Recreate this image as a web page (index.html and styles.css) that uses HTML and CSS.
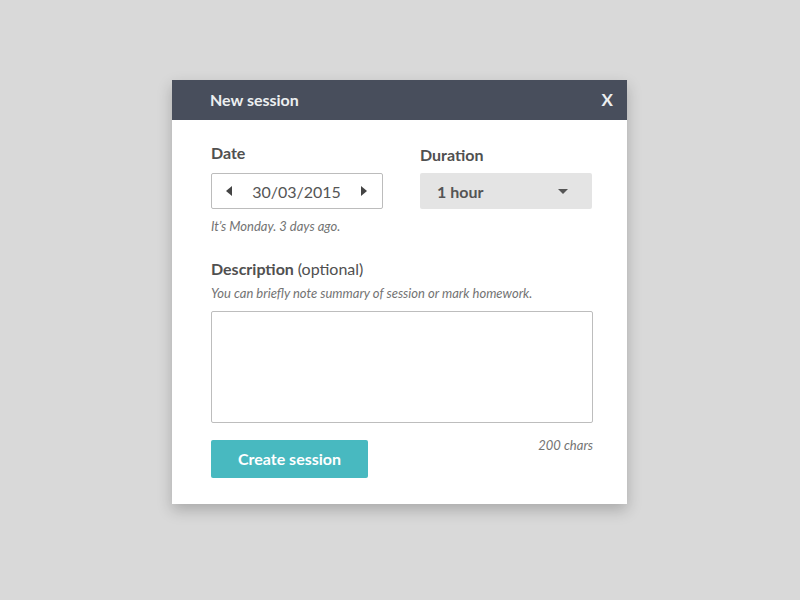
FILE: index.html
```html
<!DOCTYPE html>
<html>
<head>
<meta charset="utf-8">
<link rel="stylesheet" href="styles.css">
</head>
<body>
<div class="dialog">
  <div class="header">
    <span class="title">New session</span>
    <span class="close">X</span>
  </div>
  <div class="content">
    <div class="row">
      <div class="col">
        <div class="label">Date</div>
        <div class="datebox">
          <span class="tri tri-left"></span>
          <span class="datetext">30/03/2015</span>
          <span class="tri tri-right"></span>
        </div>
        <div class="hint first">It’s Monday. 3 days ago.</div>
      </div>
      <div class="col">
        <div class="label dur">Duration</div>
        <div class="select">
          <span class="seltext">1 hour</span>
          <span class="caret"></span>
        </div>
      </div>
    </div>
    <div class="label desc">Description <span class="opt">(optional)</span></div>
    <div class="hint">You can briefly note summary of session or mark homework.</div>
    <div class="textarea"></div>
    <div class="footer">
      <div class="button">Create session</div>
      <div class="chars">200 chars</div>
    </div>
  </div>
</div>
</body>
</html>
```
FILE: styles.css
```css
html, body {
  margin: 0;
  padding: 0;
}
body {
  background: #d9d9d9;
  font-family: Lato, "Open Sans", sans-serif;
  width: 800px;
  height: 600px;
  overflow: hidden;
}
.dialog {
  width: 455px;
  margin: 80px 0 0 172px;
  background: #fff;
  box-shadow: 0 6px 14px rgba(0, 0, 0, 0.22);
}
.header {
  box-sizing: border-box;
  height: 40px;
  background: #484e5c;
  display: flex;
  align-items: center;
  justify-content: space-between;
  padding: 0 14px 2px 38px;
  color: #eceef0;
  font-weight: 700;
}
.title {
  font-size: 16px;
}
.close {
  font-size: 17px;
}
.content {
  padding: 23px 34px 26px 39px;
}
.row {
  display: flex;
  gap: 37px;
}
.col {
  width: 172px;
}
.label {
  font-size: 16px;
  line-height: 20px;
  font-weight: 700;
  color: #505050;
  margin-bottom: 10px;
}
.label.dur {
  margin-top: 2px;
  margin-bottom: 8px;
}
.opt {
  font-weight: 400;
}
.datebox {
  box-sizing: border-box;
  height: 36px;
  border: 1px solid #bcbcbc;
  border-radius: 2px;
  display: flex;
  align-items: center;
  justify-content: space-between;
  padding: 0 15px 0 14px;
}
.datetext {
  font-size: 16px;
  color: #555;
}
.tri {
  width: 0;
  height: 0;
  border-top: 5px solid transparent;
  border-bottom: 5px solid transparent;
}
.tri-left {
  border-right: 6px solid #444;
}
.tri-right {
  border-left: 6px solid #444;
}
.select {
  box-sizing: border-box;
  height: 36px;
  background: #e4e4e4;
  border-radius: 2px;
  display: flex;
  align-items: center;
  justify-content: space-between;
  padding: 0 24px 0 17px;
}
.seltext {
  font-size: 16px;
  font-weight: 700;
  color: #555;
}
.caret {
  width: 0;
  height: 0;
  border-left: 5px solid transparent;
  border-right: 5px solid transparent;
  border-top: 5px solid #555;
}
.hint {
  font-size: 13px;
  line-height: 16px;
  font-style: italic;
  color: #737373;
}
.hint.first {
  margin-top: 9px;
}
.label.desc {
  margin-top: 25px;
  margin-bottom: 6px;
}
.textarea {
  box-sizing: border-box;
  height: 112px;
  margin-top: 10px;
  border: 1px solid #bdbdbd;
  border-radius: 2px;
}
.footer {
  display: flex;
  justify-content: space-between;
  align-items: flex-start;
  margin-top: 14px;
}
.button {
  box-sizing: border-box;
  margin-top: 3px;
  width: 157px;
  height: 38px;
  padding-bottom: 2px;
  background: #48b9c0;
  border-radius: 2px;
  color: #fff;
  font-size: 16px;
  font-weight: 700;
  display: flex;
  align-items: center;
  justify-content: center;
}
.chars {
  font-size: 13px;
  line-height: 16px;
  font-style: italic;
  color: #737373;
}
```
